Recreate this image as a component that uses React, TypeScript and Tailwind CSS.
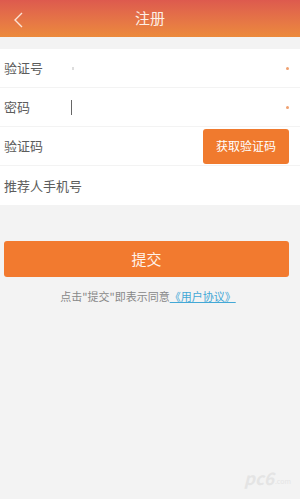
const font = { fontFamily: '"Noto Sans CJK SC", "Noto Sans", sans-serif' };

const rows = [
  { label: "验证号", star: true, mark: "dot" },
  { label: "密码", star: true, mark: "cursor" },
  { label: "验证码", star: false, mark: "btn" },
  { label: "推荐人手机号", star: false, mark: "" },
];

export default function App() {
  return (
    <div className="relative w-[300px] h-[499px] bg-[#f3f3f3] overflow-hidden" style={font}>
      {/* Header */}
      <div className="relative h-[37px] flex items-center justify-center bg-gradient-to-b from-[#dd5a4e] to-[#ec8a3c]">
        <svg className="absolute left-[12px] top-[12px]" width="12" height="16" viewBox="0 0 12 16" fill="none">
          <path d="M10 1 L3 8 L10 15" stroke="#fbe3d6" strokeWidth="1.4" />
        </svg>
        <span className="text-[15px] text-[#fdf0e6]">注册</span>
      </div>

      {/* Form */}
      <div className="mt-[12px] bg-white">
        {rows.map((r, i) => (
          <div
            key={r.label}
            className={`relative flex items-center h-[39px] pl-[4px] pr-[11px] ${i < 3 ? "border-b border-[#f3f3f3]" : ""}`}
          >
            <span className="w-[63px] whitespace-nowrap text-[13px] text-[#5c5c5c]">{r.label}</span>
            <div className="flex-1 flex items-center">
              {r.mark === "dot" && <span className="ml-[5px] w-[2px] h-[3px] bg-[#ddd]" />}
              {r.mark === "cursor" && <span className="ml-[4px] w-[1px] h-[15px] bg-[#666]" />}
            </div>
            {r.star && <span className="w-[3px] h-[3px] rounded-full bg-[#f0a070]" />}
            {r.mark === "btn" && (
              <div className="w-[86px] h-[35px] flex items-center justify-center rounded-[3px] bg-[#f07a2e] text-white text-[12px]">
                获取验证码
              </div>
            )}
          </div>
        ))}
      </div>

      {/* Submit */}
      <div className="mt-[36px] ml-[4px] w-[285px] h-[36px] flex items-center justify-center rounded-[3px] bg-[#f27a2f] text-[#fff3ea] text-[15px]">
        提交
      </div>

      <p className="mt-[11px] text-center text-[11px] text-[#888] pr-[4px]">
        点击"提交"即表示同意<span className="text-[#43a8d6] underline">《用户协议》</span>
      </p>

      {/* watermark */}
      <div className="absolute left-[244px] top-[468px] flex items-end gap-[1px] text-[#e4e4e4]">
        <span className="text-[17px] leading-[20px] font-bold italic">pc6</span>
        <span className="text-[7px] leading-[10px] pb-[2px]">.com</span>
      </div>
    </div>
  );
}
